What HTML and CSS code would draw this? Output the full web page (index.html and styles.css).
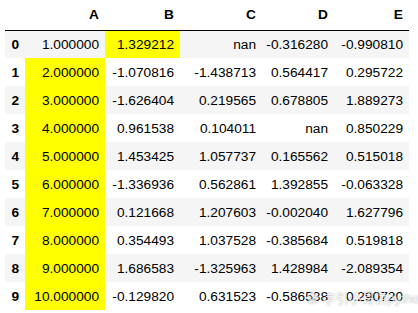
FILE: index.html
```html
<!DOCTYPE html>
<html lang="zh-CN">
<head>
	<meta charset="UTF-8">
	<title>DataFrame</title>
	<link rel="stylesheet" href="styles.css">
</head>
<body>
	<div class="wrap">
		<table class="dataframe">
			<colgroup>
				<col class="c-idx"><col class="c-a"><col class="c-b"><col class="c-c"><col class="c-d"><col class="c-e">
			</colgroup>
			<thead>
				<tr><th></th><th>A</th><th>B</th><th>C</th><th>D</th><th>E</th></tr>
			</thead>
			<tbody>
				<tr><th>0</th><td>1.000000</td><td class="hl">1.329212</td><td>nan</td><td>-0.316280</td><td>-0.990810</td></tr>
				<tr><th>1</th><td class="hl">2.000000</td><td>-1.070816</td><td>-1.438713</td><td>0.564417</td><td>0.295722</td></tr>
				<tr><th>2</th><td class="hl">3.000000</td><td>-1.626404</td><td>0.219565</td><td>0.678805</td><td>1.889273</td></tr>
				<tr><th>3</th><td class="hl">4.000000</td><td>0.961538</td><td>0.104011</td><td>nan</td><td>0.850229</td></tr>
				<tr><th>4</th><td class="hl">5.000000</td><td>1.453425</td><td>1.057737</td><td>0.165562</td><td>0.515018</td></tr>
				<tr><th>5</th><td class="hl">6.000000</td><td>-1.336936</td><td>0.562861</td><td>1.392855</td><td>-0.063328</td></tr>
				<tr><th>6</th><td class="hl">7.000000</td><td>0.121668</td><td>1.207603</td><td>-0.002040</td><td>1.627796</td></tr>
				<tr><th>7</th><td class="hl">8.000000</td><td>0.354493</td><td>1.037528</td><td>-0.385684</td><td>0.519818</td></tr>
				<tr><th>8</th><td class="hl">9.000000</td><td>1.686583</td><td>-1.325963</td><td>1.428984</td><td>-2.089354</td></tr>
				<tr><th>9</th><td class="hl">10.000000</td><td>-0.129820</td><td>0.631523</td><td>-0.586538</td><td>0.290720</td></tr>
			</tbody>
		</table>
		<div class="watermark">✿ 字引小哥讲python</div>
	</div>
</body>
</html>
```

FILE: styles.css
```css
body {
	margin: 0;
	background: #fff;
	font-family: "Liberation Sans", Arial, sans-serif;
	font-size: 13.7px;
	color: #000;
}

.wrap {
	position: relative;
	padding-left: 5px;
}

.dataframe {
	border-collapse: collapse;
	border-spacing: 0;
	table-layout: fixed;
	width: 404px;
}

.c-idx { width: 20px; }
.c-a { width: 80px; }
.c-b { width: 75px; }
.c-c { width: 82px; }
.c-d { width: 72px; }
.c-e { width: 75px; }

.dataframe th,
.dataframe td {
	padding: 0 6px 0 0;
	text-align: right;
	white-space: nowrap;
	vertical-align: middle;
}

.dataframe thead tr {
	height: 30px;
}

.dataframe thead th {
	font-weight: bold;
	border-bottom: 1px solid #000;
}

.dataframe tbody tr {
	height: 28px;
}

.dataframe tbody th {
	font-weight: bold;
}

.dataframe tbody tr:nth-child(odd) {
	background: #f5f5f5;
}

.dataframe td.hl {
	background: #ffff00;
}

/* 水印 */
.watermark {
	position: absolute;
	left: 306px;
	top: 288px;
	font-size: 13px;
	color: rgba(255, 255, 255, 0.75);
	text-shadow: 0 0 2px rgba(0, 0, 0, 0.35);
	font-family: "Liberation Sans", "Noto Sans CJK SC", sans-serif;
	white-space: nowrap;
}
```
